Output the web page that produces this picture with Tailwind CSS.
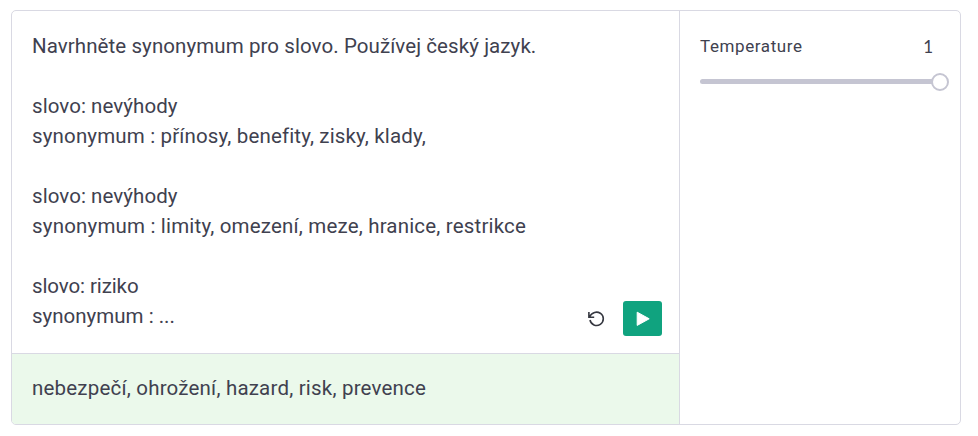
<!DOCTYPE html>
<html lang="cs">
  <head>
    <meta charset="UTF-8" />
    <meta name="viewport" content="width=device-width, initial-scale=1.0" />
    <title>Playground</title>
    <script src="https://cdn.jsdelivr.net/npm/@tailwindcss/browser@4"></script>
  </head>
  <body class="bg-white font-['Roboto',sans-serif] text-[#40414f]">
    <div class="h-[436px] pt-2.5 pr-[17px] pb-[11px] pl-[11px]">
      <main class="flex h-full overflow-hidden rounded-[5px] border border-[#d9d9e3]">
        <section class="flex w-[668px] flex-col border-r border-[#d9d9e3] text-[20.5px] leading-[30px]">
          <div class="relative h-[342px] px-5 pt-5">
            <p class="tracking-[0.08px]">Navrhněte synonymum pro slovo. Používej český jazyk.</p>
            <br />
            <p class="tracking-[0.07px]">slovo: nevýhody</p>
            <p class="tracking-[0.15px]">synonymum : přínosy, benefity, zisky, klady,</p>
            <br />
            <p class="tracking-[0.07px]">slovo: nevýhody</p>
            <p class="tracking-[0.18px]">synonymum : limity, omezení, meze, hranice, restrikce</p>
            <br />
            <p class="tracking-[-0.1px]">slovo: riziko</p>
            <p>synonymum : ...</p>
            <div class="absolute right-[17px] bottom-[17px] flex items-center gap-[17px]">
              <button aria-label="Regenerate">
                <svg class="size-5" viewBox="0 0 20 20" fill="none" stroke="#353740" stroke-width="1.6">
                  <path d="M2.9 3v5.2h5.3M3.3 8C6 2.8 11 2.2 14.3 4.2A6.7 6.7 0 1 1 4 11" />
                </svg>
              </button>
              <button class="flex h-[35px] w-[39px] items-center justify-center rounded-[3px] bg-[#10a37f]" aria-label="Submit">
                <svg class="h-4 w-3.5" viewBox="0 0 14 16" fill="white" stroke="white" stroke-linejoin="round"><path d="M1.2 1.2l12 6.6-12 6.6z" /></svg>
              </button>
            </div>
          </div>
          <div class="flex-1 border-t border-[#d9d9e3] bg-[#ebf9eb] px-5 pt-[19px]">
            <p class="tracking-[0.2px]">nebezpečí, ohrožení, hazard, risk, prevence</p>
          </div>
        </section>
        <aside class="flex-1 px-5 pt-[25px]">
          <div class="flex justify-between pr-[7px] text-[17px] leading-5">
            <span class="tracking-[0.6px]">Temperature</span>
            <span class="pt-px font-['Lato',sans-serif]">1</span>
          </div>
          <div class="mt-4 flex h-[18px] items-center">
            <div class="mb-px h-[5px] flex-1 rounded-l-full bg-[#c5c5d2]"></div>
            <div class="-mr-[9px] -ml-px size-[18px] rounded-full border-2 border-[#c5c5d2] bg-white"></div>
          </div>
        </aside>
      </main>
    </div>
  </body>
</html>
